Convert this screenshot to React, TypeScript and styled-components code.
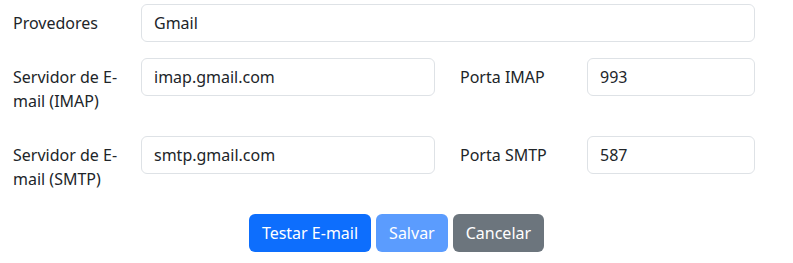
import React from "react";
import styled, { createGlobalStyle } from "styled-components";

const GlobalStyle = createGlobalStyle`
  * { box-sizing: border-box; }
  body {
    margin: 0;
    background: #fff;
    color: #212529;
    font-family: "Noto Sans", "Open Sans", sans-serif;
    font-size: 16px;
    line-height: 1.5;
  }
`;

const Form = styled.form`
  padding: 4px 38px 0 13px;
  display: flex;
  flex-direction: column;
  gap: 16px;
`;

const Row = styled.div<{ $cols: string }>`
  display: grid;
  grid-template-columns: ${(p) => p.$cols};
  align-items: start;
`;

const Label = styled.label<{ $ml?: number }>`
  padding: 7px 0;
  line-height: 24px;
  margin-left: ${(p) => p.$ml ?? 0}px;
  margin-right: 12px;
`;

const Input = styled.input`
  display: block;
  width: 100%;
  height: 38px;
  padding: 6px 12px;
  font: inherit;
  color: #212529;
  background: #fff;
  border: 1px solid #dee2e6;
  border-radius: 6px;
  outline: none;
`;

const Actions = styled.div`
  display: flex;
  justify-content: center;
  gap: 5px;
  margin-left: -13px;
  margin-right: -38px;
`;

const Button = styled.button<{ $variant: "primary" | "disabled" | "secondary" }>`
  font: inherit;
  line-height: 24px;
  padding: 6px 12px;
  border-radius: 6px;
  border: 1px solid transparent;
  color: #fff;
  cursor: pointer;
  background: ${(p) =>
    p.$variant === "primary" ? "#0d6efd" : p.$variant === "disabled" ? "#5b9cfe" : "#6c757d"};
`;

export default function App() {
  return (
    <>
      <GlobalStyle />
      <Form onSubmit={(e) => e.preventDefault()}>
        <Row $cols="128px 614px">
          <Label>Provedores</Label>
          <Input defaultValue="Gmail" />
        </Row>
        <Row $cols="128px 294px 152px 168px">
          <Label>Servidor de E-mail (IMAP)</Label>
          <Input defaultValue="imap.gmail.com" />
          <Label $ml={25}>Porta IMAP</Label>
          <Input defaultValue="993" />
        </Row>
        <Row $cols="128px 294px 152px 168px">
          <Label>Servidor de E-mail (SMTP)</Label>
          <Input defaultValue="smtp.gmail.com" />
          <Label $ml={25}>Porta SMTP</Label>
          <Input defaultValue="587" />
        </Row>
        <Actions>
          <Button type="button" $variant="primary">Testar E-mail</Button>
          <Button type="button" $variant="disabled">Salvar</Button>
          <Button type="button" $variant="secondary">Cancelar</Button>
        </Actions>
      </Form>
    </>
  );
}
